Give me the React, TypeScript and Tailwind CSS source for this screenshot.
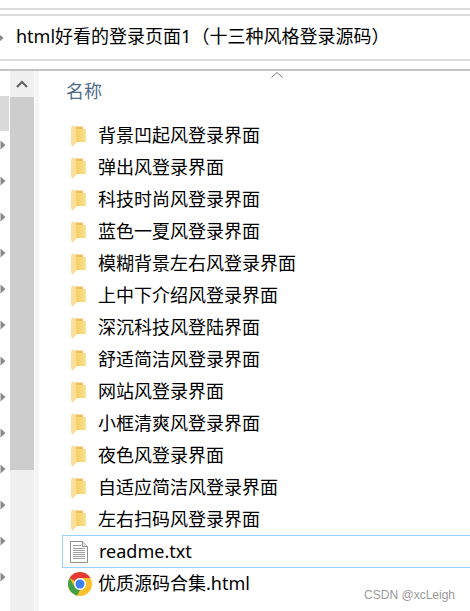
import React from 'react';

const folders = [
  '背景凹起风登录界面',
  '弹出风登录界面',
  '科技时尚风登录界面',
  '蓝色一夏风登录界面',
  '模糊背景左右风登录界面',
  '上中下介绍风登录界面',
  '深沉科技风登陆界面',
  '舒适简洁风登录界面',
  '网站风登录界面',
  '小框清爽风登录界面',
  '夜色风登录界面',
  '自适应简洁风登录界面',
  '左右扫码风登录界面',
];

const font = "font-['Noto_Sans','Noto_Sans_CJK_SC',sans-serif]";

const Arrow = () => (
  <svg width="6" height="10" viewBox="0 0 6 10" className="block shrink-0">
    <path d="M0.5 0.5 L5.5 5 L0.5 9.5 Z" fill="#8a8a8a" />
  </svg>
);

const FolderIcon = () => (
  <svg width="15" height="21" viewBox="0 0 15 21" className="block shrink-0">
    <defs>
      <linearGradient id="folderFront" x1="0" y1="0" x2="1" y2="0">
        <stop offset="0" stopColor="#f5cd62" />
        <stop offset="1" stopColor="#fbe08c" />
      </linearGradient>
    </defs>
    <path d="M0.5 0.5 H12 V3 H14.5 V16 H5 L1.5 20.5 L0.5 19 Z" fill="#efc158" />
    <path d="M5 3 H14.5 V16 H5 Z" fill="url(#folderFront)" />
    <path d="M0.5 0.5 H5 L5.5 16.5 L1.5 20.5 L0.5 19 Z" fill="#fae09a" />
  </svg>
);

const TextFileIcon = () => (
  <svg width="18" height="22" viewBox="0 0 18 22" className="block shrink-0">
    <path d="M0.5 0.5 H12.5 L17.5 5.5 V21.5 H0.5 Z" fill="#fff" stroke="#8f8f8f" />
    <path d="M12.5 0.5 V5.5 H17.5" fill="#e4e4e4" stroke="#8f8f8f" />
    <path d="M3 4.5H11M3 7.5H15M3 9.5H15M3 11.5H15M3 13.5H15M3 15.5H15M3 17.5H15" stroke="#a0a0a0" />
  </svg>
);

const ChromeIcon = () => (
  <svg width="24" height="24" viewBox="0 0 48 48" className="block shrink-0">
    <circle cx="24" cy="24" r="24" fill="#fbc02d" />
    <path d="M24 0 A24 24 0 0 1 44.8 12 L24 12 A12 12 0 0 0 13.6 18 L3.2 12 A24 24 0 0 1 24 0 Z" fill="#e53935" />
    <path d="M3.2 12 L13.6 30 L24 36 L18 47.3 A24 24 0 0 1 3.2 12 Z" fill="#43a047" />
    <circle cx="24" cy="24" r="12" fill="#fff" />
    <circle cx="24" cy="24" r="9" fill="#3b82f6" />
  </svg>
);

export default function App() {
  return (
    <div className={`relative w-[470px] h-[611px] bg-white overflow-hidden text-black ${font}`}>
      {/* address bar */}
      <div className="h-[8px] bg-white" />
      <div className="h-[2px] bg-[#dcdcdc]" />
      <div className="h-[4px] bg-white" />
      <div className="h-[2px] bg-[#dcdcdc]" />
      <div className="h-[43px] flex items-center">
        <span className="w-[16px] shrink-0 -ml-[2px]"><Arrow /></span>
        <span className="ml-[2px] pb-[3px] text-[18px] leading-none whitespace-nowrap">html好看的登录页面1（十三种风格登录源码）</span>
      </div>
      <div className="h-[2px] bg-[#dcdcdc]" />
      <div className="h-[8px] bg-white" />
      <div className="h-[2px] bg-[#c4c4c4]" />

      <div className="flex h-[541px]">
        {/* nav tree with selected row and arrows */}
        <div className="w-[10px] shrink-0 flex flex-col">
          <div className="h-[25px]" />
          <div className="h-[35px] w-[9px] bg-[#d9d9d9]" />
          <div className="flex flex-col gap-[26px] pt-[9px]">
            {Array.from({ length: 13 }).map((_, i) => (
              <Arrow key={i} />
            ))}
          </div>
        </div>
        {/* scrollbar */}
        <div className="w-[24px] shrink-0 bg-[#f0f0f0] flex flex-col">
          <div className="h-[26px] flex items-center justify-center">
            <svg width="12" height="8" viewBox="0 0 12 8">
              <path d="M1 7 L6 2 L11 7" fill="none" stroke="#606060" strokeWidth="2" />
            </svg>
          </div>
          <div className="h-[373px] bg-[#cdcdcd]" />
        </div>
        <div className="w-[4px] shrink-0 ml-[1px] bg-[#f5f5f5]" />

        {/* file list */}
        <div className="relative flex-1 min-w-0 pl-[27px]">
          <div className="absolute left-[232px] top-[1px]">
            <svg width="12" height="6" viewBox="0 0 12 6">
              <path d="M0.5 5.5 L6 0.5 L11.5 5.5" fill="none" stroke="#777" />
            </svg>
          </div>
          <div className="h-[40px] pt-[8px] text-[18px] leading-[24px] text-[#4f6b8a]">名称</div>
          <div className="flex flex-col pt-[9px]">
            {folders.map((name) => (
              <div key={name} className="h-[32px] flex items-center gap-[12px] pl-[5px]">
                <FolderIcon />
                <span className="pb-[2px] text-[18px] leading-none whitespace-nowrap">{name}</span>
              </div>
            ))}
            <div className="h-[33px] -mt-[1px] -ml-[4px] flex items-center gap-[11px] pl-[7px] border border-r-0 border-[#99d1ff]">
              <TextFileIcon />
              <span className="pb-[2px] text-[18px] leading-none whitespace-nowrap">readme.txt</span>
            </div>
            <div className="h-[31px] flex items-center gap-[6px] pl-[2px]">
              <ChromeIcon />
              <span className="pb-[2px] text-[18px] leading-none whitespace-nowrap">优质源码合集.html</span>
            </div>
          </div>
        </div>
      </div>

      <div className="absolute right-[15px] bottom-[10px] font-['Liberation_Sans',sans-serif] text-[12px] leading-none text-[#9a9a9a]">CSDN @xcLeigh</div>
    </div>
  );
}
